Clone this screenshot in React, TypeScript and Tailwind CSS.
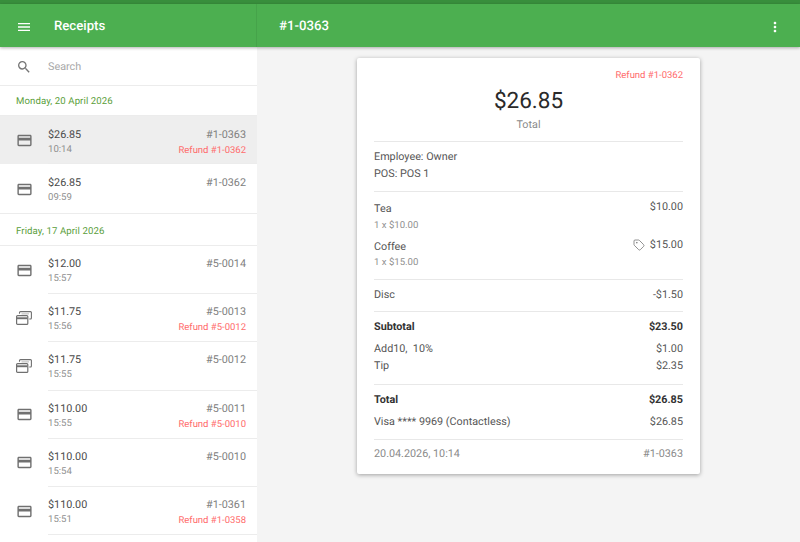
import React from 'react';
import { Tag } from 'lucide-react';

interface Receipt {
    amount: string;
    time: string;
    number: string;
    refund?: string;
    isRefund?: boolean;
    active?: boolean;
}

const group1: Receipt[] = [
    { amount: '$26.85', time: '10:14', number: '#1-0363', refund: 'Refund #1-0362', active: true },
    { amount: '$26.85', time: '09:59', number: '#1-0362' },
];

const group2: Receipt[] = [
    { amount: '$12.00', time: '15:57', number: '#5-0014' },
    { amount: '$11.75', time: '15:56', number: '#5-0013', refund: 'Refund #5-0012', isRefund: true },
    { amount: '$11.75', time: '15:55', number: '#5-0012', isRefund: true },
    { amount: '$110.00', time: '15:55', number: '#5-0011', refund: 'Refund #5-0010' },
    { amount: '$110.00', time: '15:54', number: '#5-0010' },
    { amount: '$110.00', time: '15:51', number: '#1-0361', refund: 'Refund #1-0358' },
];

const MenuIcon = () => (
    <svg width="16" height="16" viewBox="0 0 24 24" fill="currentColor">
        <path d="M3 18h18v-2H3v2zm0-5h18v-2H3v2zm0-5h18V6H3v2z" />
    </svg>
);

const MoreIcon = () => (
    <svg width="16" height="16" viewBox="0 0 24 24" fill="currentColor">
        <path d="M12 8c1.100 0 2-.9 2-2s-.9-2-2-2-2 .9-2 2 .9 2 2 2zm0 2c-1.100 0-2 .9-2 2s.9 2 2 2 2-.9 2-2-.9-2-2-2zm0 6c-1.100 0-2 .9-2 2s.9 2 2 2 2-.9 2-2-.9-2-2-2z" />
    </svg>
);

const SearchIcon = () => (
    <svg width="16" height="16" viewBox="0 0 24 24" fill="currentColor" className="text-[#757575]">
        <path d="M15.500 14h-.79l-.28-.27A6.470 6.470 0 0 0 16 9.500 6.500 6.500 0 1 0 9.500 16c1.610 0 3.090-.59 4.230-1.570l.27.28v.79l5 4.990L20.490 19l-4.990-5zm-6 0C7.010 14 5 11.990 5 9.500S7.010 5 9.500 5 14 7.010 14 9.500 11.990 14 9.500 14z" />
    </svg>
);

const CardIcon = () => (
    <svg width="17" height="17" viewBox="0 0 24 24" fill="currentColor" className="text-[#707070]">
        <path d="M20 4H4c-1.110 0-1.990.89-1.990 2L2 18c0 1.110.89 2 2 2h16c1.110 0 2-.89 2-2V6c0-1.110-.89-2-2-2zm0 14H4v-6h16v6zm0-10H4V6h16v2z" />
    </svg>
);

const RefundIcon = () => (
    <svg width="16" height="14" viewBox="0 0 16 14" fill="none" className="text-[#707070]">
        <rect x="0.6" y="4.600" width="11.200" height="8.800" rx="1" stroke="currentColor" strokeWidth="1.200" />
        <rect x="1" y="6.300" width="10.500" height="1.900" fill="currentColor" />
        <path d="M3.500 2.800V1.600a1 1 0 0 1 1-1h10a.9.9 0 0 1 .9.9v5.600a.9.9 0 0 1-.9.9h-1.200" stroke="currentColor" strokeWidth="1.100" />
        <path d="M5.500 2.900h7.500" stroke="currentColor" strokeWidth="1" opacity="0.5" />
    </svg>
);

const DateHeader = ({ label, cls }: { label: string; cls: string }) => (
    <div className={`${cls} flex items-center pl-4 text-[9.6px] tracking-[0.1px] text-[#5a9e3a] border-b border-[#ececec]`}>{label}</div>
);

const ReceiptRow = ({ r, cls, iconCls, textCls, last }: { r: Receipt; cls: string; iconCls: string; textCls: string; last: boolean }) => (
    <div className={`flex shrink-0 ${cls} ${r.active ? 'bg-[#eeeeee]' : 'bg-white'}`}>
        <div className={`w-12 flex items-center justify-center ${iconCls}`}>
            {r.isRefund ? <RefundIcon /> : <CardIcon />}
        </div>
        <div className={`flex-1 flex justify-between pr-[11px] ${textCls} ${last ? '' : 'border-b border-[#ececec]'}`}>
            <div>
                <div className="text-[10.8px] leading-[14px] text-[#4a4a4a]">{r.amount}</div>
                <div className="text-[9.6px] leading-[14px] mt-px text-[#8f8f8f]">{r.time}</div>
            </div>
            <div className="text-right">
                <div className="text-[10.8px] leading-[14px] text-[#808080]">{r.number}</div>
                {r.refund && <div className="text-[9.5px] leading-[14px] mt-[2px] text-[#ff6b6b]">{r.refund}</div>}
            </div>
        </div>
    </div>
);

const Line = ({ left, right, cls }: { left: string; right: string; cls?: string }) => (
    <div className={`flex justify-between ${cls ?? ''}`}>
        <span className="whitespace-pre">{left}</span>
        <span>{right}</span>
    </div>
);

const App: React.FC = () => {
    return (
        <div className="w-[800px] h-[542px] overflow-hidden flex flex-col bg-[#f4f4f4] font-['Roboto',sans-serif] [text-rendering:geometricPrecision]">
            <div className="h-[4px] shrink-0 bg-[#388e3c]" />
            <header className="relative z-10 h-[43px] shrink-0 flex bg-[#4caf50] text-white shadow-[0_1px_3px_rgba(0,0,0,0.3)]">
                <div className="w-[257px] flex items-center pt-[3px] border-r border-[#46a34a]">
                    <div className="ml-[16px]"><MenuIcon /></div>
                    <span className="ml-[22px] text-[13.2px] font-medium">Receipts</span>
                </div>
                <div className="flex-1 flex items-center justify-between pt-[3px]">
                    <span className="ml-[22px] text-[13.2px] font-medium">#1-0363</span>
                    <div className="mr-[17px]"><MoreIcon /></div>
                </div>
            </header>
            <div className="flex-1 flex min-h-0">
                <aside className="w-[257px] shrink-0 bg-white overflow-hidden">
                    <div className="h-[39px] flex items-center pt-[2px] border-b border-[#ececec]">
                        <div className="ml-4"><SearchIcon /></div>
                        <span className="ml-4 text-[10.8px] text-[#a8a8a8]">Search</span>
                    </div>
                    <DateHeader label="Monday, 20 April 2026" cls="h-[30px] pt-[3px]" />
                    {group1.map((r, i) => (
                        <ReceiptRow
                            key={r.number}
                            r={r}
                            cls={i === 1 ? 'h-[49px]' : 'h-12'}
                            iconCls="pt-px"
                            textCls="pt-[12px]"
                            last={i === 1}
                        />
                    ))}
                    <div className="border-t border-[#ececec]" />
                    <DateHeader label="Friday, 17 April 2026" cls="h-[32px] pt-[5px]" />
                    {group2.map((r) => (
                        <ReceiptRow key={r.number} r={r} cls="h-[48.2px]" iconCls="" textCls="pt-[11px]" last={false} />
                    ))}
                </aside>
                <main className="flex-1 flex justify-center items-start pt-[11px]">
                    <div className="w-[343px] bg-white rounded-[2px] shadow-[0_1px_4px_rgba(0,0,0,0.35)] px-[17px] text-[10.8px] text-[#555555]">
                        <div className="text-right text-[9.500px] leading-[14px] text-[#ff6b6b] pt-[11px]">Refund #1-0362</div>
                        <div className="text-center text-[22.500px] leading-[28px] text-[#2a2a2a] mt-[4px]">$26.85</div>
                        <div className="text-center text-[10.800px] leading-[14px] text-[#8a8a8a] mt-[3px] pb-[9px] border-b border-[#e8e8e8]">Total</div>
                        <div className="pt-[7px] pb-[9px] leading-[16.500px] border-b border-[#e8e8e8]">
                            <div>Employee: Owner</div>
                            <div>POS: POS 1</div>
                        </div>
                        <div className="pt-[8px] pb-[9px] border-b border-[#e8e8e8]">
                            <div className="flex justify-between items-start">
                                <div>
                                    <div className="leading-[14px] mt-[2px]">Tea</div>
                                    <div className="text-[9.600px] leading-[14px] mt-[3px] text-[#8f8f8f]">1 x $10.00</div>
                                </div>
                                <span className="leading-[14px]">$10.00</span>
                            </div>
                            <div className="flex justify-between items-start mt-[5px]">
                                <div>
                                    <div className="leading-[14px] mt-[2px]">Coffee</div>
                                    <div className="text-[9.600px] leading-[14px] mt-[2px] text-[#8f8f8f]">1 x $15.00</div>
                                </div>
                                <span className="leading-[14px] flex items-center gap-[5px]">
                                    <Tag size={12} strokeWidth={1.500} className="text-[#6e6e6e]" />
                                    $15.00
                                </span>
                            </div>
                        </div>
                        <Line left="Disc" right="-$1.50" cls="pt-[7px] pb-[8px] leading-[16px] border-b border-[#e8e8e8]" />
                        <div className="pt-[6px] pb-[10px] border-b border-[#e8e8e8] leading-[17px]">
                            <Line left="Subtotal" right="$23.50" cls="font-bold text-[#333333] mb-[5px]" />
                            <Line left="Add10,  10%" right="$1.00" />
                            <Line left="Tip" right="$2.35" />
                        </div>
                        <div className="pt-[6px] pb-[9px] border-b border-[#e8e8e8] leading-[17px]">
                            <Line left="Total" right="$26.85" cls="font-bold text-[#333333] mb-[5px]" />
                            <Line left="Visa **** 9969 (Contactless)" right="$26.85" />
                        </div>
                        <Line left="20.04.2026, 10:14" right="#1-0363" cls="pt-[6px] pb-[12px] leading-[16px] text-[#8a8a8a]" />
                    </div>
                </main>
            </div>
        </div>
    );
};

export default App;
